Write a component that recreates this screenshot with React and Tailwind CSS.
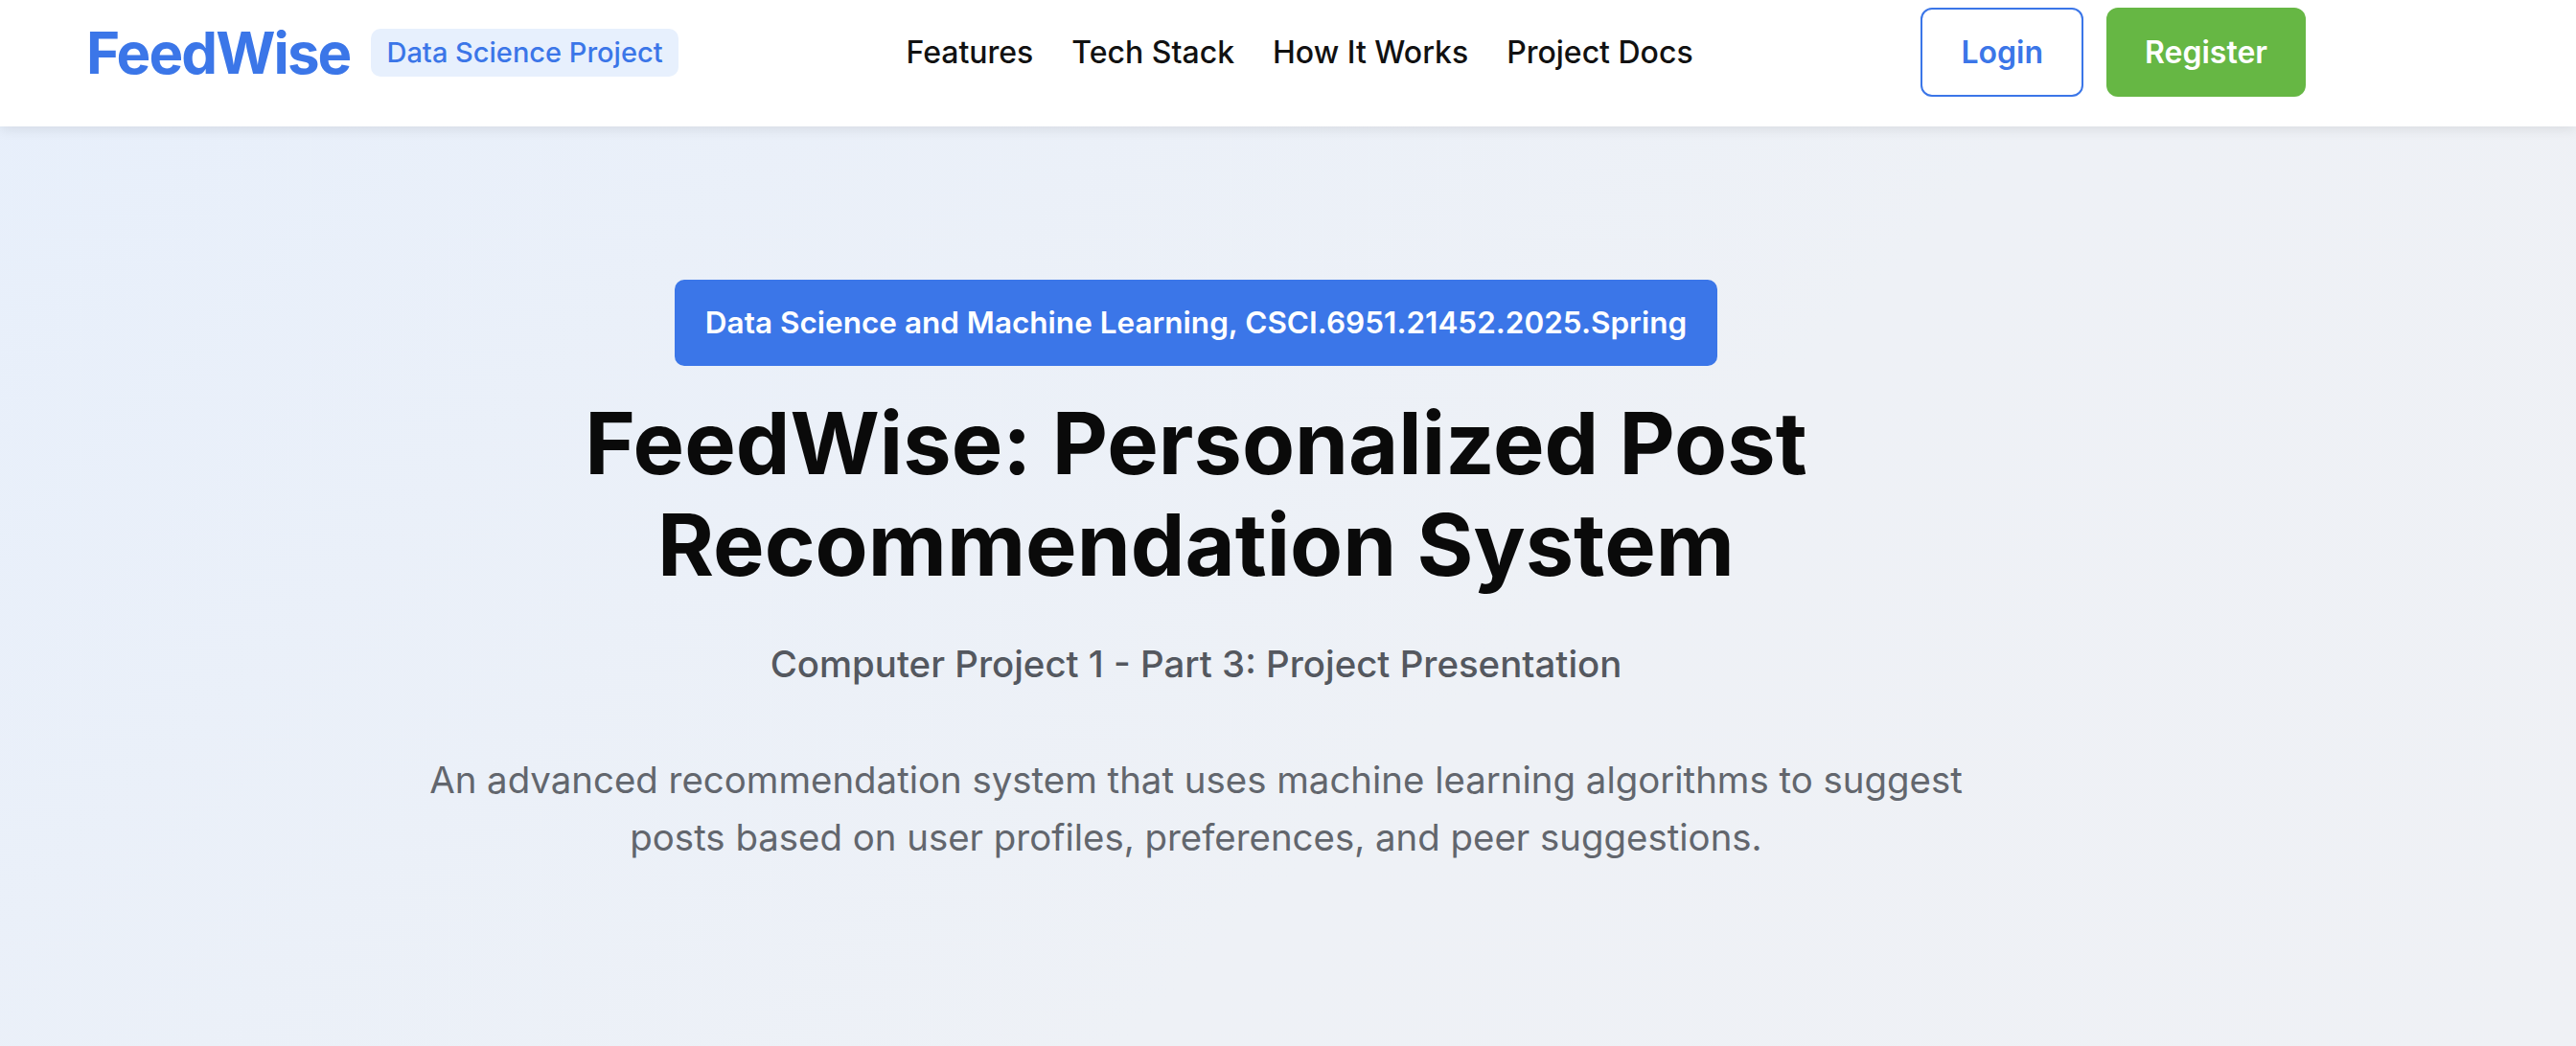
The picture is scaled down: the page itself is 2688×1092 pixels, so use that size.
export default function App() {
  return (
    <div
      className="min-h-[1092px] w-full bg-[linear-gradient(135deg,#e7effb_0%,#eef1f6_60%,#eff1f5_100%)]"
      style={{ fontFamily: "Inter, 'Noto Sans', sans-serif" }}
    >
      <header className="h-[132px] w-full bg-white shadow-[0_4px_12px_rgba(0,0,0,0.08)]">
        <div className="flex h-[109px] w-[2496px] items-center justify-between px-[90px]">
          <div className="flex items-center gap-[22px]">
            <span className="text-[60px] font-bold leading-none tracking-[-1.9px] text-[#3b76e8]">FeedWise</span>
            <span className="flex h-[50px] items-center rounded-[10px] bg-[#e7f0fd] px-[16px] text-[29px] font-medium text-[#3b76e8]">
              Data Science Project
            </span>
          </div>
          <nav className="flex items-center gap-[40px] text-[32px] font-medium text-[#111]">
            <a>Features</a>
            <a>Tech Stack</a>
            <a>How It Works</a>
            <a>Project Docs</a>
          </nav>
          <div className="flex items-center gap-[24px]">
            <button className="flex h-[93px] items-center rounded-[12px] border-2 border-[#3b76e8] bg-white px-[40px] text-[32px] font-semibold text-[#3b76e8]">
              Login
            </button>
            <button className="flex h-[93px] items-center rounded-[12px] bg-[#66b744] px-[40px] text-[32px] font-semibold text-white">
              Register
            </button>
          </div>
        </div>
      </header>
      <main className="flex w-[2496px] flex-col items-center pt-[160px] text-center">
        <div className="flex h-[90px] items-center rounded-[10px] bg-[#3b76e8] px-[32px] text-[31.5px] font-semibold text-white">
          Data Science and Machine Learning, CSCI.6951.21452.2025.Spring
        </div>
        <h1 className="mt-[28px] text-[90px] font-bold leading-[106px] text-[#0a0a0a]">
          FeedWise: Personalized Post
          <br />
          Recommendation System
        </h1>
        <p className="mt-[44px] text-[38.4px] font-medium leading-[54px] text-[#54585f]">
          Computer Project 1 - Part 3: Project Presentation
        </p>
        <p className="mt-[64px] max-w-[1640px] text-[38.4px] leading-[60px] text-[#62666d]">
          An advanced recommendation system that uses machine learning algorithms to suggest posts based on user profiles, preferences, and peer suggestions.
        </p>
      </main>
    </div>
  );
}
